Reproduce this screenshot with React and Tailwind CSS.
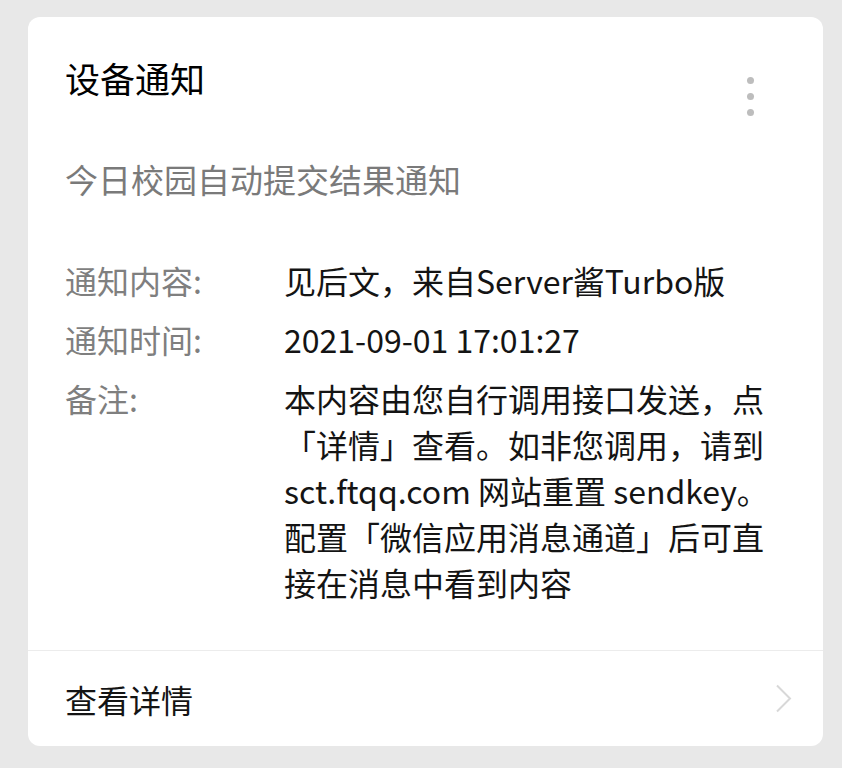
const rows = [
  { label: "通知内容:", value: "见后文，来自Server酱Turbo版" },
  { label: "通知时间:", value: "2021-09-01 17:01:27" },
  {
    label: "备注:",
    value:
      "本内容由您自行调用接口发送，点「详情」查看。如非您调用，请到 sct.ftqq.com 网站重置 sendkey。配置「微信应用消息通道」后可直接在消息中看到内容",
  },
];

const App = () => {
  return (
    <div
      className="min-h-screen bg-[#e8e8e8] pt-[17px] pl-[28px] pr-[19px] pb-[22px]"
      style={{ fontFamily: '"Noto Sans CJK SC", "Noto Sans", sans-serif' }}
    >
      <div className="bg-white rounded-[12px] overflow-hidden">
        {/* header */}
        <div className="pt-[37px] pl-[37px] pr-[33px]">
          <div className="flex justify-between items-start h-[48px]">
            <h1 className="text-[35px] leading-[48px] font-normal text-black">设备通知</h1>
            <div className="flex flex-col gap-[9px] mt-[23px] mr-[36px]">
              <span className="block w-[7px] h-[7px] rounded-full bg-[#bdbdbd]" />
              <span className="block w-[7px] h-[7px] rounded-full bg-[#bdbdbd]" />
              <span className="block w-[7px] h-[7px] rounded-full bg-[#bdbdbd]" />
            </div>
          </div>

          <p className="mt-[55px] text-[33px] leading-[44px] text-[#7a7a7a]">今日校园自动提交结果通知</p>

          {/* detail rows */}
          <div className="mt-[56px] pb-[45px] flex flex-col gap-[13px]">
            {rows.map((r) => (
              <div key={r.label} className="flex text-[32px] leading-[46px]">
                <span className="w-[219px] shrink-0 text-[#7f7f7f]">{r.label}</span>
                <span className="flex-1 text-[#141414]">{r.value}</span>
              </div>
            ))}
          </div>
        </div>

        {/* footer */}
        <div className="border-t border-[#ececec] h-[96px] flex items-center justify-between pl-[37px] pr-[31px]">
          <span className="text-[32px] text-[#141414]">查看详情</span>
          <svg width="17" height="29" viewBox="0 0 17 29" fill="none">
            <polyline points="2,1.5 15,14.5 2,27.5" stroke="#d8d8d8" strokeWidth="2" />
          </svg>
        </div>
      </div>
    </div>
  );
};

export default App;
